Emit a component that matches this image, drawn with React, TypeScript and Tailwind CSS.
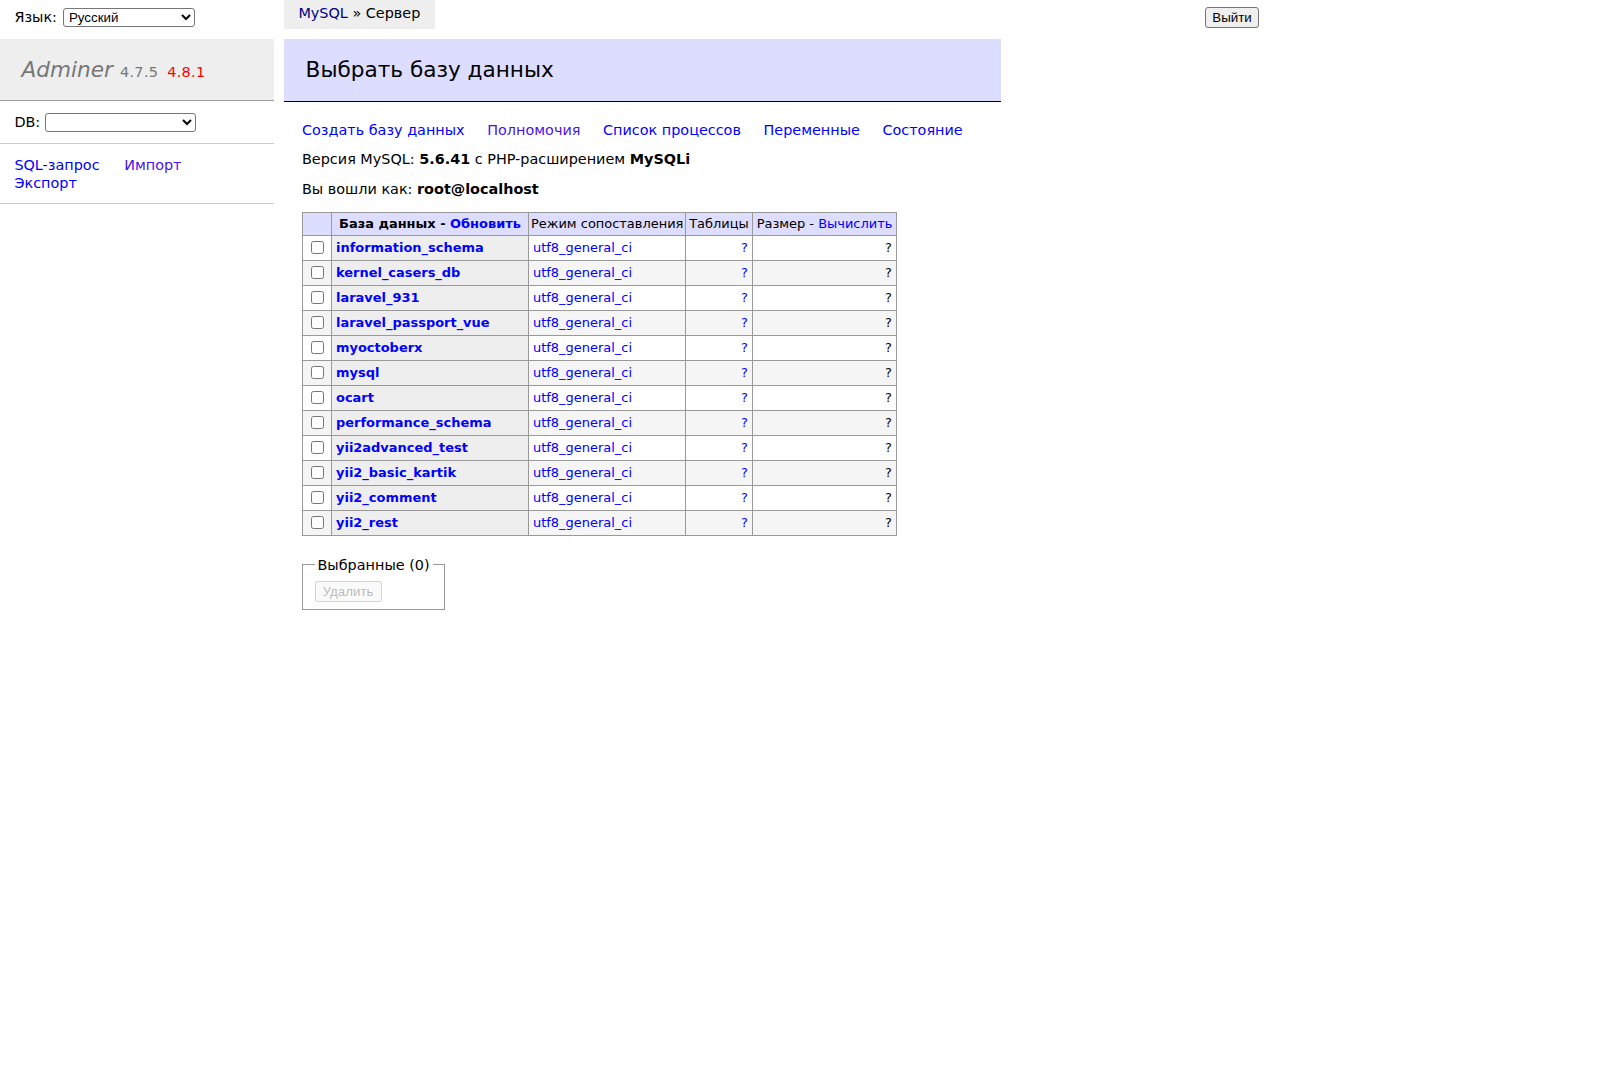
import React from "react";

const dbs = [
  "information_schema",
  "kernel_casers_db",
  "laravel_931",
  "laravel_passport_vue",
  "myoctoberx",
  "mysql",
  "ocart",
  "performance_schema",
  "yii2advanced_test",
  "yii2_basic_kartik",
  "yii2_comment",
  "yii2_rest",
];

export default function App() {
  return (
    <div className="flex w-[1608px] min-h-[1080px] bg-white text-black font-['DejaVu_Sans',Verdana,sans-serif] text-[14.4px] leading-[18px]">
      {/* Sidebar */}
      <aside className="w-[274px] shrink-0 flex flex-col">
        <div className="h-[39px] px-[14.4px] pt-[4.3px]">
          <div className="h-[26px] flex items-center gap-[6px]">
            <span>Язык:</span>
            <select
              defaultValue="ru"
              className="w-[132px] h-[19px] border border-[#767676] rounded-[3px] bg-white text-black text-[13.33px] leading-[15px] font-['Liberation_Sans',Arial,sans-serif] pl-[1px]"
            >
              <option value="ru">Русский</option>
            </select>
          </div>
        </div>
        <h1 className="h-[62px] flex items-baseline bg-[#eee] border-b border-[#999] px-[21.6px] pt-[17px] text-[21.6px] leading-[27px] text-[#777] font-normal whitespace-nowrap">
          <a className="italic text-[#777]">Adminer</a>
          <span className="ml-[7px] text-[14.47px] leading-[18px] text-[#777] tracking-[0.3px]">
            4.7.5 <a className="ml-[4px] text-[#ff0000]">4.8.1</a>
          </span>
        </h1>
        <div className="px-[14.4px] py-[11.52px] border-b border-[#ccc] flex items-center gap-[5px]">
          <span>DB:</span>
          <select
            defaultValue=""
            className="w-[151px] h-[19px] border border-[#767676] rounded-[3px] bg-white text-black text-[13.33px] leading-[15px] font-['Liberation_Sans',Arial,sans-serif]"
          >
            <option value=""></option>
          </select>
        </div>
        <div className="px-[14.4px] py-[11.52px] border-b border-[#ccc]">
          <div>
            <a className="text-[#0000ff] mr-[20px]">SQL-запрос</a>{" "}
            <a className="text-[#4a10f0]">Импорт</a>
          </div>
          <div>
            <a className="text-[#0000ff]">Экспорт</a>
          </div>
        </div>
      </aside>

      {/* Main */}
      <main className="ml-[10px] w-[975px] flex flex-col">
        <div className="h-[39px] flex items-start">
          <div className="h-[29px] bg-[#eee] px-[14.4px] leading-[26px] whitespace-nowrap">
            <a className="text-[#000080]">MySQL</a> » Сервер
          </div>
          <button className="ml-auto mt-[7px] w-[54px] h-[21px] border border-[#767676] rounded-[3px] bg-[#efefef] text-black text-[13.33px] leading-[15px] font-['Liberation_Sans',Arial,sans-serif]">
            Выйти
          </button>
        </div>

        <h2 className="w-[717px] bg-[#ddf] border-b border-black px-[21.6px] py-[17.28px] text-[21.6px] leading-[27px] font-normal">
          Выбрать базу данных
        </h2>

        <div className="pl-[18px]">
          <p className="mt-[19px] whitespace-nowrap">
            <a className="text-[#0000ff] mr-[18px]">Создать базу данных</a>{" "}
            <a className="text-[#4a10f0] mr-[18px]">Полномочия</a>{" "}
            <a className="text-[#0000ff] mr-[18px]">Список процессов</a>{" "}
            <a className="text-[#0000ff] mr-[18px]">Переменные</a>{" "}
            <a className="text-[#0000ff] mr-[18px]">Состояние</a>
          </p>
          <p className="mt-[11.52px]">
            Версия MySQL: <b>5.6.41</b> с PHP-расширением <b>MySQLi</b>
          </p>
          <p className="mt-[11.52px]">
            Вы вошли как: <b>root@localhost</b>
          </p>

          <table className="mt-[14px] table-fixed w-[594px] border-collapse border-t border-l border-[#999] text-[12.96px] leading-[16.2px]">
            <colgroup>
              <col className="w-[29px]" />
              <col className="w-[197px]" />
              <col className="w-[157px]" />
              <col className="w-[67px]" />
              <col className="w-[144px]" />
            </colgroup>
            <thead>
              <tr className="bg-[#ddf]">
                <td className="border-r border-b border-[#999] py-[3px]"></td>
                <th className="border-r border-b border-[#999] py-[3px] px-[2px] text-center font-bold whitespace-nowrap">
                  База данных - <a className="text-[#0000ff]">Обновить</a>
                </th>
                <td className="border-r border-b border-[#999] py-[3px] px-[2px] text-center whitespace-nowrap">
                  Режим сопоставления
                </td>
                <td className="border-r border-b border-[#999] py-[3px] px-[2px] text-center whitespace-nowrap">
                  Таблицы
                </td>
                <td className="border-r border-b border-[#999] py-[3px] px-[2px] text-center whitespace-nowrap">
                  Размер - <a className="text-[#0000ff]">Вычислить</a>
                </td>
              </tr>
            </thead>
            <tbody>
              {dbs.map((name, i) => (
                <tr key={name} className={i % 2 === 1 ? "bg-[#f5f5f5]" : "bg-white"}>
                  <td className="border-r border-b border-[#999] py-[2.5px] pl-[4px] pr-[2px]">
                    <input
                      type="checkbox"
                      className="block w-[13px] h-[13px] ml-[4px] my-[3px]"
                    />
                  </td>
                  <th className="border-r border-b border-[#999] bg-[#eee] py-[2.5px] px-[4px] text-left font-bold whitespace-nowrap">
                    <a className="text-[#0000ff]">{name}</a>
                  </th>
                  <td className="border-r border-b border-[#999] py-[2.5px] px-[4px] whitespace-nowrap">
                    <a className="text-[#0000ff]">utf8_general_ci</a>
                  </td>
                  <td className="border-r border-b border-[#999] py-[2.5px] px-[4px] text-right">
                    <a className="text-[#0000ff]">?</a>
                  </td>
                  <td className="border-r border-b border-[#999] py-[2.5px] px-[4px] text-right">
                    ?
                  </td>
                </tr>
              ))}
            </tbody>
          </table>

          <fieldset className="mt-[20px] inline-block border border-[#999] px-[11.5px] pt-[7.2px] pb-[7.2px]">
            <legend className="px-[3px] whitespace-nowrap">Выбранные (0)</legend>
            <button
              disabled
              className="block w-[67px] h-[21px] border border-[rgba(118,118,118,0.3)] rounded-[3px] bg-[rgba(239,239,239,0.3)] text-[rgba(16,16,16,0.3)] text-[13.33px] leading-[15px] font-['Liberation_Sans',Arial,sans-serif]"
            >
              Удалить
            </button>
          </fieldset>
        </div>
      </main>
    </div>
  );
}
